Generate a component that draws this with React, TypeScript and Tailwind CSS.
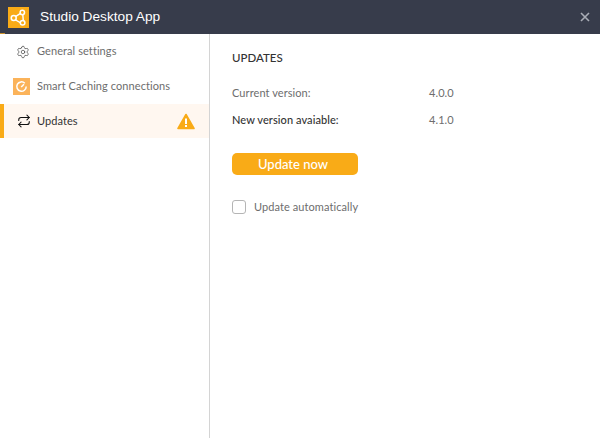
import { Settings, Repeat } from "lucide-react";

function Logo() {
  return (
    <svg width="21" height="21" viewBox="0 0 22 22" className="block">
      <rect width="22" height="22" fill="#f9ab17" />
      <path d="M7 10.5 L13.5 6.5 M7 13 L13 16.5 M15.5 8 L16 14" stroke="#fff" strokeWidth="1.5" fill="none" />
      <circle cx="6" cy="11.5" r="2.6" fill="#f9ab17" stroke="#fff" strokeWidth="1.6" />
      <circle cx="15" cy="5.8" r="2.3" fill="#f9ab17" stroke="#fff" strokeWidth="1.6" />
      <circle cx="15.3" cy="16.5" r="2.4" fill="#f9ab17" stroke="#fff" strokeWidth="1.6" />
    </svg>
  );
}

function CacheIcon() {
  return (
    <svg width="17" height="17" viewBox="0 0 17 17" className="block">
      <rect width="17" height="17" fill="#fbb35a" />
      <path d="M11.8 5.2 A4.7 4.7 0 1 0 13.2 8.5" stroke="#fff" strokeWidth="1.5" fill="none" />
      <path d="M8.2 9 L11 6.2" stroke="#fff" strokeWidth="1.5" />
    </svg>
  );
}

function WarnIcon() {
  return (
    <svg width="18" height="17" viewBox="0 0 18 17" className="block">
      <path d="M9 1.5 L17 15.5 H1 Z" fill="#f9ab17" stroke="#f9ab17" strokeWidth="1.6" strokeLinejoin="round" />
      <rect x="8" y="5.5" width="2" height="5.5" fill="#fff" />
      <rect x="8" y="12" width="2" height="2" fill="#fff" />
    </svg>
  );
}

export default function App() {
  return (
    <div className="flex h-[438px] w-[600px] flex-col overflow-hidden bg-white font-['Lato',sans-serif]">
      {/* Title bar */}
      <div className="flex h-[33px] shrink-0 items-center justify-between bg-[#373c4b] pl-2 pr-[10px] pt-px">
        <div className="flex items-center gap-[11px]">
          <Logo />
          <span className="font-['Liberation_Sans',sans-serif] text-[13.7px] text-white">Studio Desktop App</span>
        </div>
        <svg width="10" height="10" viewBox="0 0 10 10" className="block">
          <path d="M1 1 L9 9 M9 1 L1 9" stroke="#a9adb6" strokeWidth="1.6" />
        </svg>
      </div>
      <div className="h-px shrink-0 bg-[#373c4b]">
        <div className="h-px w-[5px] bg-[#c98f2a]" />
      </div>

      <div className="flex min-h-0 flex-1">
        {/* Sidebar */}
        <div className="w-[210px] shrink-0 border-r border-[#d4d4d4]">
          <div className="flex h-[35px] items-center pl-4 text-[11px] tracking-[0.08px] text-[#6d6d6d]">
            <Settings size={14} strokeWidth={1.2} className="text-[#444]" />
            <span className="ml-[7px]">General settings</span>
          </div>
          <div className="flex h-[35px] items-center pl-[13px] text-[11px] tracking-[0.08px] text-[#6d6d6d]">
            <CacheIcon />
            <span className="ml-[7px]">Smart Caching connections</span>
          </div>
          <div className="flex h-[34px] items-center border-l-4 border-[#f9ab17] bg-[#fff7f0] pl-[13px] pr-[14px] text-[11px] tracking-[0.08px] text-[#333]">
            <Repeat size={14} strokeWidth={1.8} className="text-[#111]" />
            <span className="ml-[6px] flex-1">Updates</span>
            <WarnIcon />
          </div>
        </div>

        {/* Content */}
        <div className="flex-1 pl-[22px] pt-4">
          <h1 className="text-[11.5px] leading-[15px] font-medium text-[#333]">UPDATES</h1>
          <div className="mt-[20px] flex h-4 items-center text-[11px] tracking-[0.08px] text-[#6d6d6d]">
            <span className="w-[197px]">Current version:</span>
            <span>4.0.0</span>
          </div>
          <div className="mt-[11px] flex h-4 items-center text-[11px] tracking-[0.08px]">
            <span className="w-[197px] font-medium text-[#333]">New version avaiable:</span>
            <span className="text-[#6d6d6d]">4.1.0</span>
          </div>
          <button className="mt-[25px] block h-[22px] w-[126px] rounded-[5px] bg-[#f9ab17] pr-1 text-[13px] leading-[22px] font-medium text-white">
            Update now
          </button>
          <div className="mt-[24px] flex items-center text-[11px] tracking-[0.08px] text-[#6d6d6d]">
            <span className="block h-[14px] w-[14px] rounded-[3px] border border-[#b5b5b5] bg-white" />
            <span className="ml-2">Update automatically</span>
          </div>
        </div>
      </div>
    </div>
  );
}
